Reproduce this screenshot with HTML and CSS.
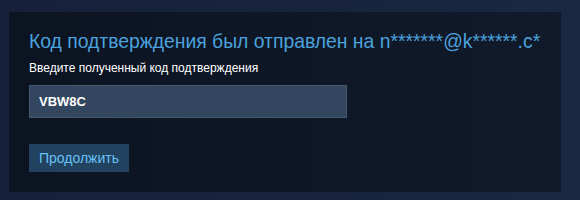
FILE: index.html
```html
<!DOCTYPE html>
<html lang="ru">

<head>
  <meta charset="UTF-8">
  <meta name="viewport" content="width=device-width, initial-scale=1.0">
  <title>Подтверждение</title>
  <link rel="stylesheet" href="styles.css">
</head>

<body>
  <div class="panel">
    <h1 class="title">Код подтверждения был отправлен на n*******@k******.c*</h1>
    <div class="label">Введите полученный код подтверждения</div>
    <input class="code" type="text" value="VBW8C">
    <button class="submit">Продолжить</button>
  </div>
</body>

</html>
```

FILE: styles.css
```css
body {
  margin: 0;
  width: 580px;
  height: 200px;
  padding: 12px 0 0 9px;
  box-sizing: border-box;
  background: linear-gradient(90deg, #16203a 0%, #1a2842 100%);
  font-family: "Liberation Sans", Arial, sans-serif;
}

.panel {
  width: 552px;
  height: 180px;
  box-sizing: border-box;
  padding: 17px 20px 0 20px;
  background: linear-gradient(90deg, #0c1422 0%, #111a2a 100%);
}

.title {
  margin: 0;
  font-size: 19.35px;
  font-weight: normal;
  color: #4ba2dc;
  line-height: 24px;
  white-space: nowrap;
}

.label {
  margin-top: 7px;
  font-size: 12px;
  color: #fff;
  line-height: 16px;
}

.code {
  display: block;
  margin-top: 9px;
  width: 318px;
  height: 33px;
  box-sizing: border-box;
  padding: 0 9px;
  background: #32465f;
  border: 1px solid #45596f;
  color: #fff;
  font-family: "Liberation Sans", Arial, sans-serif;
  font-size: 13px;
  font-weight: bold;
  outline: none;
}

.submit {
  display: block;
  margin-top: 26px;
  width: 100px;
  height: 28px;
  padding: 0;
  border: none;
  background: #21435f;
  color: #67c1f5;
  font-family: "Liberation Sans", Arial, sans-serif;
  font-size: 14px;
  cursor: pointer;
}
```
